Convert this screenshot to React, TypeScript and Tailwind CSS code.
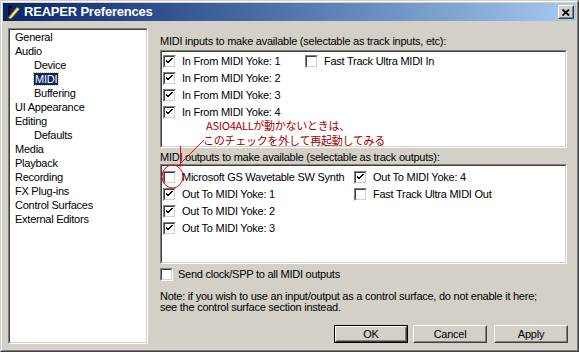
import React from "react";

const font = { fontFamily: '"Liberation Sans", Arial, sans-serif' };

function Check({ checked }: { checked: boolean }) {
  return (
    <div className="w-[13px] h-[13px] flex-none border border-t-[#808080] border-l-[#808080] border-r-white border-b-white bg-white">
      <div className="w-full h-full border border-t-[#404040] border-l-[#404040] border-r-[#d4d0c8] border-b-[#d4d0c8] bg-white">
        {checked && (
          <svg width="9" height="9" viewBox="0 0 9 9" className="block">
            <path d="M1 3.5 L3 5.5 L7.5 1" stroke="#000" strokeWidth="2" fill="none" shapeRendering="crispEdges" />
          </svg>
        )}
      </div>
    </div>
  );
}

function Item({ checked, label, w }: { checked: boolean; label: string; w?: string }) {
  return (
    <div className={`flex items-center h-[17px] ${w ?? ""}`}>
      <Check checked={checked} />
      <span className="ml-[6px] text-[11px] leading-[11px] text-black whitespace-nowrap">{label}</span>
    </div>
  );
}

function Sunken({ children, className }: { children: React.ReactNode; className: string }) {
  return (
    <div className={`border border-t-[#808080] border-l-[#808080] border-r-white border-b-white ${className}`}>
      <div className="w-full h-full border border-t-[#404040] border-l-[#404040] border-r-[#d4d0c8] border-b-[#d4d0c8] bg-white">
        {children}
      </div>
    </div>
  );
}

function Btn({ label, def }: { label: string; def?: boolean }) {
  return (
    <div className={`w-[74px] h-[18px] ${def ? "border border-black" : ""}`}>
      <div className="w-full h-full border border-t-white border-l-white border-r-[#404040] border-b-[#404040] bg-[#d4d0c8]">
        <div className="w-full h-full border border-t-[#d4d0c8] border-l-[#d4d0c8] border-r-[#808080] border-b-[#808080] flex items-center justify-center text-[11px] text-black">
          {label}
        </div>
      </div>
    </div>
  );
}

const tree: { t: string; ind?: boolean; sel?: boolean }[] = [
  { t: "General" },
  { t: "Audio" },
  { t: "Device", ind: true },
  { t: "MIDI", ind: true, sel: true },
  { t: "Buffering", ind: true },
  { t: "UI Appearance" },
  { t: "Editing" },
  { t: "Defaults", ind: true },
  { t: "Media" },
  { t: "Playback" },
  { t: "Recording" },
  { t: "FX Plug-ins" },
  { t: "Control Surfaces" },
  { t: "External Editors" },
];

export default function App() {
  return (
    <div style={font} className="relative w-[579px] h-[352px] tracking-[-0.25px] border border-t-[#d4d0c8] border-l-[#d4d0c8] border-r-[#404040] border-b-[#404040] bg-[#d4d0c8]">
      <div className="w-full h-full border border-t-white border-l-white border-r-[#808080] border-b-[#808080] p-[1px] flex flex-col">
        {/* title bar */}
        <div className="h-[18px] flex items-center bg-gradient-to-r from-[#0a246a] to-[#a6caf0] pl-[2px] pr-[2px]">
          <svg width="16" height="16" viewBox="0 0 16 16" className="flex-none">
            <path d="M3 14 L12 3 L15 5 L6 15 Z" fill="#f0d070" stroke="#6a5010" strokeWidth="1" />
            <path d="M6 13 L13 5" stroke="#fff4b0" strokeWidth="1" />
            <path d="M4 2 L4 11" stroke="#000" strokeWidth="1.2" />
            <path d="M4 2 L8 3 L4 5 Z" fill="#000" />
          </svg>
          <span className="ml-[3px] text-white font-bold text-[13px] leading-[18px] tracking-[-0.2px]">REAPER Preferences</span>
          <div className="ml-auto w-[16px] h-[14px] border border-t-white border-l-white border-r-[#404040] border-b-[#404040] bg-[#d4d0c8]">
            <div className="w-full h-full border border-t-[#d4d0c8] border-l-[#d4d0c8] border-r-[#808080] border-b-[#808080] flex items-center justify-center">
              <svg width="8" height="7" viewBox="0 0 8 7">
                <path d="M0.5 0.5 L7 6.5 M7 0.5 L0.5 6.5" stroke="#000" strokeWidth="1.8" />
              </svg>
            </div>
          </div>
        </div>

        {/* body */}
        <div className="flex pt-[7px] pl-[5px]">
          <Sunken className="w-[140px] h-[316px] flex-none">
            <div>
              {tree.map((it) => (
                <div key={it.t} className={`h-[14px] flex items-start text-[11px] ${it.ind ? "pl-[24px]" : "pl-[5px]"}`}>
                  {it.sel ? (
                    <span className="mt-[1px] bg-[#0a246a] text-white px-[1px] leading-[12px] outline outline-1 outline-dotted outline-[#d8c060]">{it.t}</span>
                  ) : (
                    <span className="mt-[1px] text-black leading-[12px]">{it.t}</span>
                  )}
                </div>
              ))}
            </div>
          </Sunken>

          <div className="ml-[12px] w-[407px] flex flex-col">
            <div className="mt-[7px] h-[12px] text-[11px] leading-[12px] text-black whitespace-nowrap">
              MIDI inputs to make available (selectable as track inputs, etc):
            </div>
            <Sunken className="mt-[3px] h-[98px]">
              <div className="flex pl-[1px] pt-[1px]">
                <div className="w-[142px]">
                  <Item checked label="In From MIDI Yoke:  1" />
                  <Item checked label="In From MIDI Yoke:  2" />
                  <Item checked label="In From MIDI Yoke:  3" />
                  <Item checked label="In From MIDI Yoke:  4" />
                </div>
                <div>
                  <Item checked={false} label="Fast Track Ultra MIDI In" />
                </div>
              </div>
            </Sunken>
            <div className="mt-[3px] h-[12px] text-[11px] leading-[12px] text-black whitespace-nowrap">
              MIDI outputs to make available (selectable as track outputs):
            </div>
            <Sunken className="mt-[1px] h-[100px]">
              <div className="flex pl-[1px] pt-[3px]">
                <div className="w-[191px]">
                  <Item checked={false} label="Microsoft GS Wavetable SW Synth" />
                  <Item checked label="Out To MIDI Yoke:  1" />
                  <Item checked label="Out To MIDI Yoke:  2" />
                  <Item checked label="Out To MIDI Yoke:  3" />
                </div>
                <div>
                  <Item checked label="Out To MIDI Yoke:  4" />
                  <Item checked={false} label="Fast Track Ultra MIDI Out" />
                </div>
              </div>
            </Sunken>
            <div className="mt-[4px] flex items-center h-[13px]">
              <div className="w-[13px] h-[13px] flex-none border border-t-[#808080] border-l-[#808080] border-r-white border-b-white">
                <div className="w-full h-full border border-t-[#404040] border-l-[#404040] border-r-[#d4d0c8] border-b-[#d4d0c8] bg-white" />
              </div>
              <span className="ml-[5px] text-[11px] text-black whitespace-nowrap">Send clock/SPP to all MIDI outputs</span>
            </div>
            <div className="mt-[10px] text-[11px] leading-[11px] text-black whitespace-nowrap">
              <div>Note: if you wish to use an input/output as a control surface, do not enable it here;</div>
              <div>see the control surface section instead.</div>
            </div>
            <div className="mt-[12px] flex justify-end -mr-[1px]">
              <Btn label="OK" def />
              <div className="ml-[5px]"><Btn label="Cancel" /></div>
              <div className="ml-[7px]"><Btn label="Apply" /></div>
            </div>
          </div>
        </div>
      </div>

      {/* red annotation overlay */}
      <div
        className="absolute left-[202px] top-[117px] text-[11px] leading-[15px] tracking-[-0.25px] text-[#a00000] whitespace-nowrap"
        style={{ fontFamily: '"Noto Sans CJK JP", sans-serif' }}
      >
        <div className="pl-[3px]">ASIO4ALLが動かないときは、</div>
        <div>このチェックを外して再起動してみる</div>
      </div>
      <svg className="absolute left-0 top-0 pointer-events-none" width="579" height="352">
        <path d="M179.5 145 L179.5 166" stroke="#ff0000" strokeWidth="1" />
        <path d="M203 139 L178 164" stroke="#ff0000" strokeWidth="1" />
        <ellipse cx="171.5" cy="175.5" rx="10.5" ry="11.5" stroke="#ff0000" strokeWidth="1" fill="none" />
      </svg>
    </div>
  );
}
